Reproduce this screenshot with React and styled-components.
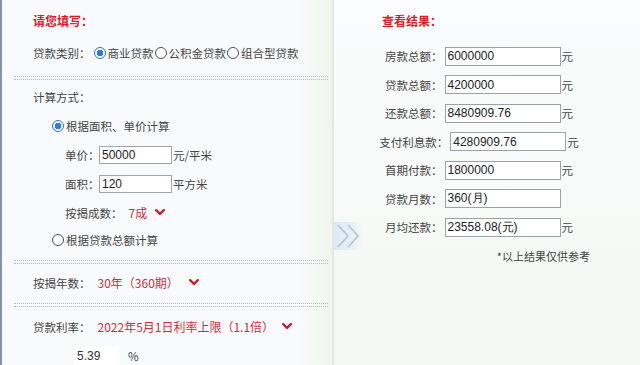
import React from "react";
import styled, { createGlobalStyle } from "styled-components";

const GlobalStyle = createGlobalStyle`
  html, body {
    margin: 0;
    padding: 0;
    background: #f8fafb;
  }
  body {
    font-family: "Noto Sans CJK SC", "Noto Sans", sans-serif;
    font-size: 11.5px;
    color: #454545;
  }
`;

const Page = styled.div`
  position: relative;
  display: flex;
  width: 640px;
  height: 365px;
  overflow: hidden;
`;

const LeftPanel = styled.div`
  width: 332px;
  flex-shrink: 0;
  border-left: 2px solid #8397a2;
  padding-top: 6px;
  box-sizing: border-box;
  background: linear-gradient(to right, #f8fafb 0%, #f8fafb 90%, #f3f8f2 97%, #eef5ec 100%);
`;

const RightPanel = styled.div`
  flex: 1;
  border-left: 2px solid #e2eadf;
  padding: 6px 16px 0 0;
  background: linear-gradient(to bottom, #fafcfd 0%, #f7faf8 50%, #f3f8f2 100%);
`;

const Section = styled.div`
  padding: ${(p) => p.$pad || "0"};
`;

const Row = styled.div`
  display: flex;
  align-items: center;
  height: ${(p) => p.$h || 29}px;
  padding-left: ${(p) => p.$indent || 31}px;
  white-space: nowrap;
`;

const Title = styled.div`
  display: flex;
  align-items: center;
  height: 28px;
  padding-left: ${(p) => p.$indent}px;
  color: #d8202a;
  font-weight: 700;
  font-size: 12px;
`;

const Dotted = styled.div`
  height: 2px;
  margin: 0 4px 0 12px;
  border-top: 1px dotted #b4bbc2;
  border-bottom: 1px dotted #b4bbc2;
`;

const Radio = styled.span`
  display: inline-block;
  width: 12px;
  height: 12px;
  box-sizing: border-box;
  border-radius: 50%;
  margin: 0 2px 0 ${(p) => p.$ml || 0}px;
  border: 1px solid ${(p) => (p.$checked ? "#2c6fd3" : "#4d4d4d")};
  background: ${(p) =>
    p.$checked
      ? "radial-gradient(circle, #2b78e0 0, #2b78e0 3px, #ffffff 3.6px)"
      : "#ffffff"};
  flex-shrink: 0;
`;

const RadioText = styled.span`
  margin-right: 1px;
`;

const Label = styled.span`
  width: ${(p) => p.$w || "auto"};
  flex-shrink: 0;
`;

const Field = styled.input`
  width: 73px;
  height: 18px;
  box-sizing: border-box;
  border: 1px solid #9ea7b0;
  background: #fff;
  padding: 0 2px;
  margin-right: 1px;
  font-family: "Liberation Sans", Arial, sans-serif;
  font-size: 12px;
  color: #222;
  outline: none;
`;

const RateField = styled(Field)`
  width: 46px;
  height: 19px;
  border: none;
  padding-left: 4px;
  margin-right: 9px;
  background: #ffffff;
  color: #333;
`;

const Select = styled.span`
  display: inline-flex;
  align-items: center;
  color: #c9303c;
  font-size: 12px;
  margin-left: ${(p) => p.$ml || 0}px;
  gap: ${(p) => p.$gap || 8}px;
`;

const Chevron = () => (
  <svg width="10" height="7" viewBox="0 0 10 7">
    <polyline
      points="1.2,1.2 5,5 8.8,1.2"
      fill="none"
      stroke="#c81e2c"
      strokeWidth="2.4"
      strokeLinecap="round"
      strokeLinejoin="round"
    />
  </svg>
);

const ResultRow = styled.div`
  display: flex;
  align-items: center;
  justify-content: center;
  height: 28.5px;
  white-space: nowrap;
`;

const ResultBox = styled.div`
  width: 116px;
  height: 19px;
  box-sizing: border-box;
  border: 1px solid #9aa3ac;
  background: #fff;
  margin: 0 1px 0 2px;
  padding: 0 2px;
  display: flex;
  align-items: center;
  font-family: "Liberation Sans", Arial, sans-serif;
  font-size: 12px;
  color: #222;
`;

const Unit = styled.span`
  visibility: ${(p) => (p.$hidden ? "hidden" : "visible")};
`;

const ResultList = styled.div`
  margin-top: 8px;
`;

const Note = styled.div`
  height: 28px;
  display: flex;
  align-items: center;
  justify-content: flex-end;
  padding-right: 34px;
  font-size: 11px;
  color: #444;
`;

const ArrowBadge = styled.div`
  position: absolute;
  left: 333px;
  top: 222px;
  width: 30px;
  height: 28px;
  background: linear-gradient(to right, #dce9f3 0%, #e6eff6 55%, rgba(240, 246, 250, 0) 100%);
  display: flex;
  align-items: center;
  justify-content: center;
`;

const results = [
  { label: "房款总额：", value: "6000000", unit: "元" },
  { label: "贷款总额：", value: "4200000", unit: "元" },
  { label: "还款总额：", value: "8480909.76", unit: "元" },
  { label: "支付利息款：", value: "4280909.76", unit: "元" },
  { label: "首期付款：", value: "1800000", unit: "元" },
  { label: "贷款月数：", value: "360(月)", unit: "元", hidden: true },
  { label: "月均还款：", value: "23558.08(元)", unit: "元" },
];

export default function App() {
  return (
    <>
      <GlobalStyle />
      <Page>
        <LeftPanel>
          <Section $pad="0 0 4px 0">
            <Title $indent={31}>请您填写：</Title>
            <Row $h={38}>
              <Label>贷款类别：</Label>
              <Radio $checked $ml={3} />
              <RadioText>商业贷款</RadioText>
              <Radio />
              <RadioText>公积金贷款</RadioText>
              <Radio />
              <RadioText>组合型贷款</RadioText>
            </Row>
          </Section>
          <Dotted />
          <Section $pad="2px 0 7px 0">
            <Row>计算方式：</Row>
            <Row $indent={50}>
              <Radio $checked />
              <RadioText>根据面积、单价计算</RadioText>
            </Row>
            <Row $indent={63}>
              <Label $w="34px">单价：</Label>
              <Field readOnly value="50000" />
              <span>元/平米</span>
            </Row>
            <Row $indent={63}>
              <Label $w="34px">面积：</Label>
              <Field readOnly value="120" />
              <span>平方米</span>
            </Row>
            <Row $indent={63}>
              <Label>按揭成数：</Label>
              <Select $ml={6}>
                7成 <Chevron />
              </Select>
            </Row>
            <Row $h={26} $indent={50}>
              <Radio />
              <RadioText>根据贷款总额计算</RadioText>
            </Row>
          </Section>
          <Dotted />
          <Section $pad="4px 0 6px 0">
            <Row>
              <Label>按揭年数：</Label>
              <Select $ml={7} $gap={10}>
                30年（360期） <Chevron />
              </Select>
            </Row>
          </Section>
          <Dotted />
          <Section $pad="5px 0 0 0">
            <Row>
              <Label>贷款利率：</Label>
              <Select $ml={7} $gap={8}>
                2022年5月1日利率上限（1.1倍） <Chevron />
              </Select>
            </Row>
            <Row $indent={71}>
              <RateField readOnly value="5.39" />
              <span>%</span>
            </Row>
          </Section>
        </LeftPanel>

        <RightPanel>
          <Title $indent={48}>查看结果：</Title>
          <ResultList>
            {results.map((r) => (
              <ResultRow key={r.label}>
                <span>{r.label}</span>
                <ResultBox>{r.value}</ResultBox>
                <Unit $hidden={r.hidden}>{r.unit}</Unit>
              </ResultRow>
            ))}
          </ResultList>
          <Note>*以上结果仅供参考</Note>
        </RightPanel>

        <ArrowBadge>
          <svg width="28" height="24" viewBox="0 0 28 24">
            <polyline points="4,1 14,12 4,23" fill="none" stroke="#b6c7d5" strokeWidth="1.8" />
            <polyline points="14,1 24,12 14,23" fill="none" stroke="#b6c7d5" strokeWidth="1.8" />
          </svg>
        </ArrowBadge>
      </Page>
    </>
  );
}
